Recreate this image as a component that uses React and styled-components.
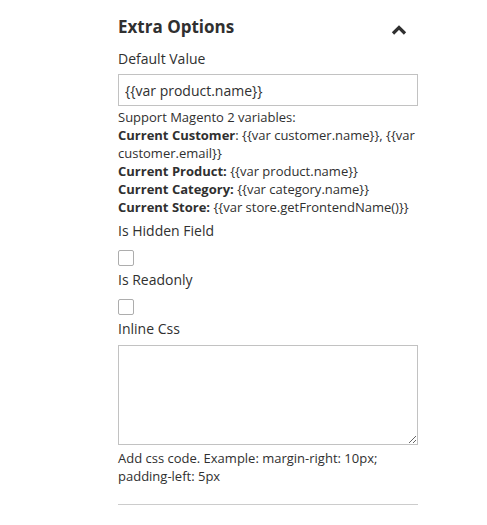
import React from "react";
import styled, { createGlobalStyle } from "styled-components";

const Global = createGlobalStyle`
  html, body { margin: 0; padding: 0; background: #fff; }
  body { font-family: "Open Sans", "Noto Sans", sans-serif; color: #333; }
`;

const Panel = styled.div`
  width: 300px;
  padding: 15px 0 0 118px;
  display: flex;
  flex-direction: column;
`;

const Header = styled.div`
  display: flex;
  align-items: center;
  justify-content: space-between;
  height: 24px;
  margin-bottom: 10px;
`;

const Title = styled.h2`
  margin: 0;
  font-size: 17px;
  font-weight: 700;
  line-height: 24px;
  color: #303030;
`;

const Chevron = styled.svg`
  width: 16px;
  height: 12px;
  margin-right: 11px;
  margin-top: 6px;
`;

const Label = styled.label`
  display: block;
  font-size: 14px;
  line-height: 20px;
  color: #303030;
  margin-bottom: ${(p) => p.$gap ?? 5}px;
`;

const Input = styled.input`
  box-sizing: border-box;
  width: 300px;
  height: 32px;
  border: 1px solid #c2c2c2;
  padding: 0 6px;
  font-family: inherit;
  font-size: 14px;
  color: #303030;
  outline: none;
`;

const Note = styled.div`
  font-size: 13px;
  line-height: 18px;
  color: #303030;
  margin-top: ${(p) => p.$top ?? 2}px;
  margin-bottom: ${(p) => p.$bottom ?? 5}px;
  b { font-weight: 700; }
`;

const Checkbox = styled.span`
  display: block;
  box-sizing: border-box;
  width: 16px;
  height: 16px;
  border: 1px solid #adadad;
  border-radius: 2px;
  background: #fff;
  margin-bottom: 4px;
`;

const TextArea = styled.textarea`
  box-sizing: border-box;
  display: block;
  width: 300px;
  height: 100px;
  border: 1px solid #c2c2c2;
  padding: 6px;
  font-family: inherit;
  font-size: 14px;
  outline: none;
  resize: vertical;
`;

const Divider = styled.hr`
  width: 300px;
  margin: 19px 0 0;
  border: 0;
  border-top: 1px solid #ccc;
`;

export default function App() {
  return (
    <>
      <Global />
      <Panel>
        <Header>
          <Title>Extra Options</Title>
          <Chevron viewBox="0 0 16 12">
            <path d="M2 9.5 L8 3.5 L14 9.5" fill="none" stroke="#303030" strokeWidth="3.2" />
          </Chevron>
        </Header>
        <Label>Default Value</Label>
        <Input defaultValue="{{var product.name}}" />
        <Note>
          Support Magento 2 variables:
          <br />
          <b>Current Customer</b>: {"{{var customer.name}}, {{var customer.email}}"}
          <br />
          <b>Current Product:</b> {"{{var product.name}}"}
          <br />
          <b>Current Category:</b> {"{{var category.name}}"}
          <br />
          <b>Current Store:</b> {"{{var store.getFrontendName()}}"}
        </Note>
        <Label $gap={9}>Is Hidden Field</Label>
        <Checkbox />
        <Label $gap={9}>Is Readonly</Label>
        <Checkbox />
        <Label $gap={6}>Inline Css</Label>
        <TextArea />
        <Note $top={4} $bottom={0}>
          Add css code. Example: margin-right: 10px; padding-left: 5px
        </Note>
        <Divider />
      </Panel>
    </>
  );
}
